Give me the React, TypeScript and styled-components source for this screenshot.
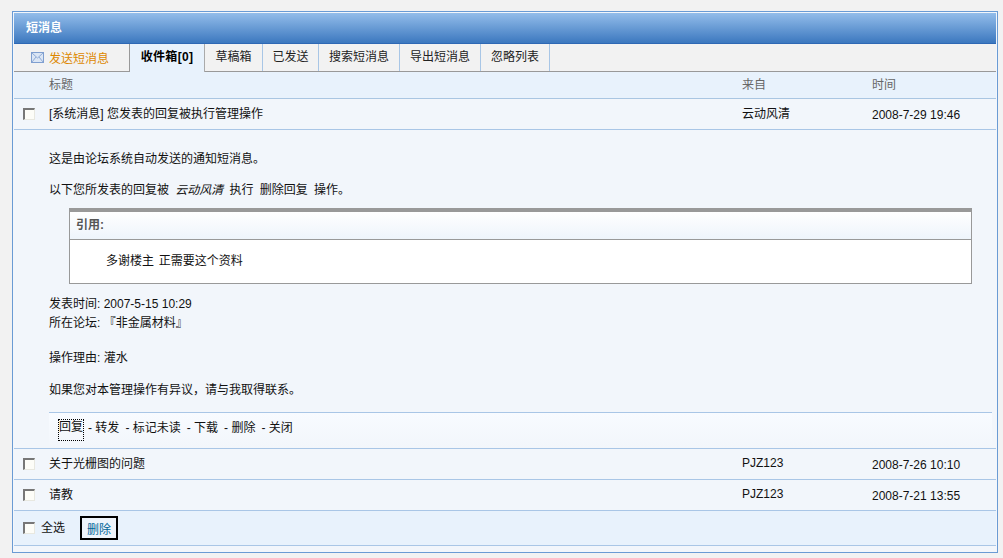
import React from 'react'
import styled, { createGlobalStyle } from 'styled-components'

const GlobalStyle = createGlobalStyle`
html, body {
  margin: 0;
  padding: 0;
  background: #f2f2f2;
}
body {
  font-family: "Liberation Sans", "Noto Sans CJK SC", sans-serif;
  font-size: 12px;
  color: #111;
}
`

type IMessage = {
  title: string;
  from: string;
  time: string;
}

const otherMessages: IMessage[] = [
  { title: '关于光栅图的问题', from: 'PJZ123', time: '2008-7-26 10:10' },
  { title: '请教', from: 'PJZ123', time: '2008-7-21 13:55' },
]

const tabs = [
  { label: '草稿箱', width: 58 },
  { label: '已发送', width: 56 },
  { label: '搜索短消息', width: 81 },
  { label: '导出短消息', width: 81 },
  { label: '忽略列表', width: 69 },
]

const actions = ['转发', '标记未读', '下载', '删除', '关闭']

const MailIcon = () => (
  <svg width="13" height="11" viewBox="0 0 13 11">
    <rect x="0.5" y="0.5" width="12" height="10" fill="#dbe6f5" stroke="#7f9fd0" />
    <path d="M1 1 L6.5 6 L12 1 M1 10 L5 5 M12 10 L8 5" fill="none" stroke="#8fabd6" />
  </svg>
)

const App = () => {
  return (
    <Page>
      <GlobalStyle />
      <Panel>
        <Title>短消息</Title>
        <TabBar>
          <SendTab><MailIcon /><span>发送短消息</span></SendTab>
          <ActiveTab>收件箱[0]</ActiveTab>
          {tabs.map(tab => (
            <Tab key={tab.label} $width={tab.width}>{tab.label}</Tab>
          ))}
        </TabBar>
        <HeadRow>
          <span />
          <span>标题</span>
          <span>来自</span>
          <span>时间</span>
        </HeadRow>
        <Row>
          <CheckBox />
          <RowText>[系统消息] 您发表的回复被执行管理操作</RowText>
          <RowText>云动风清</RowText>
          <Time>2008-7-29 19:46</Time>
        </Row>
        <Detail>
          <Paragraph>这是由论坛系统自动发送的通知短消息。</Paragraph>
          <Paragraph>以下您所发表的回复被 &nbsp;<Italic>云动风清</Italic>&nbsp; 执行&nbsp; 删除回复&nbsp; 操作。</Paragraph>
          <Quote>
            <QuoteHead>引用:</QuoteHead>
            <QuoteBody>多谢楼主&nbsp; 正需要这个资料</QuoteBody>
          </Quote>
          <Info>
            发表时间: 2007-5-15 10:29<br />
            所在论坛: 『非金属材料』
          </Info>
          <Reason>操作理由: 灌水</Reason>
          <Notice>如果您对本管理操作有异议，请与我取得联系。</Notice>
          <Actions>
            <Focused>回复</Focused>
            {actions.map(action => (
              <Action key={action}>- {action}</Action>
            ))}
          </Actions>
        </Detail>
        {otherMessages.map(message => (
          <Row key={message.title}>
            <CheckBox />
            <RowText>{message.title}</RowText>
            <RowText>{message.from}</RowText>
            <Time>{message.time}</Time>
          </Row>
        ))}
        <Footer>
          <CheckBox />
          <SelectAll>全选</SelectAll>
          <DeleteButton>删除</DeleteButton>
        </Footer>
        <Strip />
      </Panel>
    </Page>
  )
}

export default App

const Page = styled.div`
padding: 11px 0 6px 12px;
`
const Panel = styled.div`
border: 1px solid #6a9bd4;
padding: 1px 1px 0;
background: #f2f6fb;
width: 982px;
`
const Title = styled.div`
height: 30px;
line-height: 30px;
padding-left: 12px;
font-size: 12px;
font-weight: bold;
color: #fff;
background: linear-gradient(#93bdea, #3c78bf);
border-bottom: 1px solid #2e68b4;
`
const TabBar = styled.div`
display: flex;
height: 28px;
box-sizing: border-box;
background: #f2f2f2;
border-bottom: 1px solid #999;
`
const SendTab = styled.div`
width: 115px;
padding-left: 17px;
box-sizing: border-box;
display: flex;
align-items: center;
gap: 5px;
color: #dd8800;
`
const ActiveTab = styled.div`
width: 76px;
height: 28px;
box-sizing: border-box;
background: #e8f2fc;
border-left: 1px solid #999;
border-right: 1px solid #aaa;
text-align: center;
line-height: 26px;
font-weight: bold;
letter-spacing: 0.3px;
color: #000;
`
const Tab = styled.div<{$width: number}>`
width: ${props => props.$width}px;
box-sizing: border-box;
border-right: 1px solid #a8c6e6;
text-align: center;
line-height: 26px;
color: #222;
`
const HeadRow = styled.div`
display: grid;
grid-template-columns: 35px 693px 130px 1fr;
align-items: center;
height: 27px;
padding-bottom: 4px;
background: #e8f2fc;
border-bottom: 1px solid #a9c6e2;
color: #666;
box-sizing: border-box;
`
const Row = styled.div`
display: grid;
grid-template-columns: 35px 693px 130px 1fr;
align-items: center;
height: 31px;
box-sizing: border-box;
background: #f2f6fb;
border-bottom: 1px solid #a9c6e6;
color: #111;
`
const CheckBox = styled.span`
display: block;
width: 12px;
height: 12px;
margin-left: 9px;
box-sizing: border-box;
background: #fdfdf8;
border-top: 2px solid #777;
border-left: 2px solid #777;
border-right: 1px solid #e8e8e0;
border-bottom: 1px solid #e8e8e0;
`
const RowText = styled.span`
padding-bottom: 3px;
`
const Time = styled.span`
padding-top: 2px;
`
const Detail = styled.div`
padding: 20px 4px 0 35px;
height: 319px;
box-sizing: border-box;
background: #f2f6fb;
border-bottom: 1px solid #a9c6e6;
`
const Paragraph = styled.p`
margin: 0 0 13px;
line-height: 18px;
word-spacing: -0.2px;
`
const Italic = styled.em`
font-style: italic;
`
const Quote = styled.div`
margin: -4px 20px 0 20px;
background: #fff;
border: 1px solid #999;
border-top: 4px solid #999;
`
const QuoteHead = styled.div`
height: 27px;
line-height: 27px;
padding-left: 6px;
font-weight: bold;
color: #555;
background: linear-gradient(#fff, #eef4fb);
border-bottom: 1px solid #999;
`
const QuoteBody = styled.div`
height: 43px;
line-height: 42px;
padding-left: 36px;
word-spacing: -1px;
`
const Info = styled.div`
margin-top: 11px;
line-height: 19px;
`
const Reason = styled.div`
margin-top: 16px;
line-height: 18px;
`
const Notice = styled.div`
margin-top: 14px;
line-height: 18px;
`
const Actions = styled.div`
margin-top: 13px;
height: 36px;
display: flex;
padding: 6px 0 0 9px;
box-sizing: border-box;
gap: 6px;
border-top: 1px solid #a9c6e6;
background: linear-gradient(#f8fbff, #f2f6fb);
line-height: 18px;
`
const Focused = styled.span`
height: 22px;
box-sizing: border-box;
border: 1px dotted #000;
line-height: 14px;
margin-right: -2px;
`
const Action = styled.span`
color: #111;
`
const Footer = styled.div`
display: flex;
align-items: center;
height: 35px;
box-sizing: border-box;
background: #e8f2fc;
border-bottom: 1px solid #a9c6e6;
`
const SelectAll = styled.span`
margin-left: 6px;
padding-bottom: 4px;
`
const DeleteButton = styled.button`
margin-left: 15px;
width: 38px;
height: 24px;
padding: 0;
font: inherit;
color: #006699;
background: #eef4fb;
border: 1px solid #000;
outline: 1px solid #000;
outline-offset: -2px;
`
const Strip = styled.div`
height: 6px;
background: #f2f6fb;
`
